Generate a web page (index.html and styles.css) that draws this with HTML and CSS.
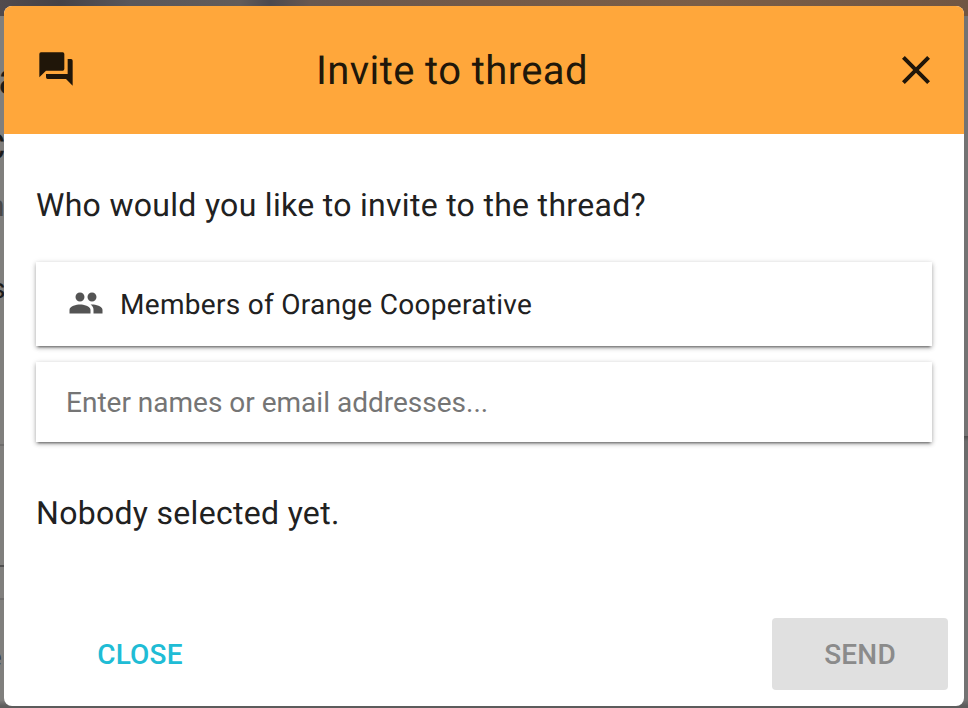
FILE: index.html
```html
<!DOCTYPE html>
<html lang="en">
<head>
<meta charset="utf-8">
<title>Invite to thread</title>
<link rel="stylesheet" href="styles.css">
</head>
<body>
<div class="backdrop" aria-hidden="true">
  <div class="cover"></div>
  <span class="peek peek-title">a</span>
  <span class="peek peek-subtitle">C</span>
  <span class="peek peek-meta">n</span>
  <span class="peek peek-text">s</span>
  <span class="peek peek-foot">e</span>
  <i class="rule rule-a"></i><i class="rule rule-b"></i><i class="rule rule-c"></i>
  <i class="panel-edge"></i>
</div>
<main class="dialog">
  <header class="header">
    <svg class="icon-forum" viewBox="0 0 24 24"><path d="M17 12V3a1 1 0 0 0-1-1H3a1 1 0 0 0-1 1v14l4-4h10a1 1 0 0 0 1-1m4-6h-2v9H6v2a1 1 0 0 0 1 1h11l4 4V7a1 1 0 0 0-1-1z"/></svg>
    <h1 class="title">Invite to thread</h1>
    <svg class="icon-close" viewBox="0 0 24 24"><path d="M19 6.41 17.59 5 12 10.59 6.41 5 5 6.41 10.59 12 5 17.59 6.41 19 12 13.41 17.59 19 19 17.59 13.41 12z"/></svg>
  </header>
  <section class="content">
    <p class="question">Who would you like to invite to the thread?</p>
    <div class="card group">
      <svg class="icon-people" viewBox="0 0 24 24"><path d="M16 11c1.66 0 2.99-1.34 2.99-3S17.66 5 16 5s-3 1.34-3 3 1.34 3 3 3m-8 0c1.66 0 2.99-1.34 2.99-3S9.66 5 8 5 5 6.34 5 8s1.34 3 3 3m0 2c-2.33 0-7 1.17-7 3.5V19h14v-2.500C15 14.170 10.330 13 8 13m8 0c-.29 0-.62.02-.97.05 1.160.840 1.970 1.970 1.970 3.450V19h6v-2.500c0-2.330-4.670-3.500-7-3.500"/></svg>
      <span class="group-name">Members of Orange Cooperative</span>
    </div>
    <input class="card names" type="text" placeholder="Enter names or email addresses...">
    <p class="status">Nobody selected yet.</p>
  </section>
  <footer class="actions">
    <button class="button close">CLOSE</button>
    <button class="button send" disabled>SEND</button>
  </footer>
</main>
</body>
</html>
```
FILE: styles.css
```css
* { box-sizing: border-box; }
body {
  margin: 0;
  width: 968px;
  height: 708px;
  padding: 6px 4px 2px;
  overflow: hidden;
  font-family: Roboto, sans-serif;
  color: #212121;
  text-rendering: geometricPrecision;
}
h1, p { margin: 0; font-weight: 400; }
svg { display: block; flex: none; }

.backdrop {
  position: absolute;
  inset: 0;
  z-index: -1;
  overflow: hidden;
  background: linear-gradient(#0000 700px, #5c5c5c 706px), linear-gradient(90deg, #807f7d 50%, #737373 50%);
}
.cover {
  height: 16px;
  background: linear-gradient(90deg, #514b4e 0, #454247 60px, #59575b 130px, #625c5a 240px, #4c494e 270px, #685850 310px, #745a48 480px, #7b5e47 700px, #715643 968px);
}
.peek { position: absolute; line-height: 1; color: #1c1c1c; }
.peek-title { left: -2px; top: 56px; font-size: 46px; }
.peek-subtitle { left: -18px; top: 129px; font-size: 36px; }
.peek-meta { left: -12px; top: 192px; font-size: 30px; color: #484848; }
.peek-text { left: -9px; top: 275px; font-size: 28px; }
.peek-foot { left: -12px; top: 645px; font-size: 26px; color: #3b3b3b; }
.rule { position: absolute; left: 0; width: 4px; height: 2px; background: #6e6d6c; }
.rule-a { top: 444px; }
.rule-b { top: 565px; background: #505050; }
.rule-c { top: 598px; }
.panel-edge { position: absolute; right: 0; top: 436px; width: 4px; height: 24px; background: linear-gradient(#4c4c4c, #6b6b6b 5px); }

.dialog {
  display: flex;
  flex-direction: column;
  height: 700px;
  overflow: hidden;
  border-radius: 8px;
  background: #fff;
}
.header {
  display: flex;
  align-items: center;
  height: 128px;
  padding: 0 24px 0 32px;
  background: #ffa73b;
  color: #20170a;
}
.icon-forum { width: 40px; height: 40px; margin-top: -2px; fill: #201609; }
.icon-close { width: 48px; height: 48px; fill: #201609; }
.title { flex: 1; text-align: center; font-size: 40px; line-height: 40px; letter-spacing: .4px; margin: 2px 64px 0 0; }

.content { display: flex; flex-direction: column; flex: 1; padding: 47px 32px 0; }
.question, .status { font-size: 32px; line-height: 48px; letter-spacing: .3px; }
.card {
  width: 896px;
  border: 0;
  background: #fff;
  box-shadow: 0 3px 2px -2px #0006, 0 2px 4px #0004, 0 1px 6px #0002;
}
.group { display: flex; align-items: center; height: 84px; margin-top: 33px; padding-left: 32px; }
.icon-people { width: 36px; height: 36px; margin-top: -3px; fill: #545454; }
.group-name { margin-left: 16px; font-size: 28px; letter-spacing: .3px; }
.names { height: 80px; margin-top: 16px; padding: 0 30px; outline: 0; font: 28px Roboto, sans-serif; letter-spacing: 0; }
.names::placeholder { color: #757575; opacity: 1; }
.status { margin-top: 47px; }

.actions { display: flex; justify-content: space-between; padding: 16px; }
.button {
  width: 176px;
  height: 72px;
  border: 0;
  border-radius: 4px;
  background: none;
  font: 500 28px Roboto, sans-serif;
  letter-spacing: .2px;
}
.close { margin-left: 32px; color: #20bcd5; }
.send { background: #e0e0e0; color: #8b8b8b; }
```
